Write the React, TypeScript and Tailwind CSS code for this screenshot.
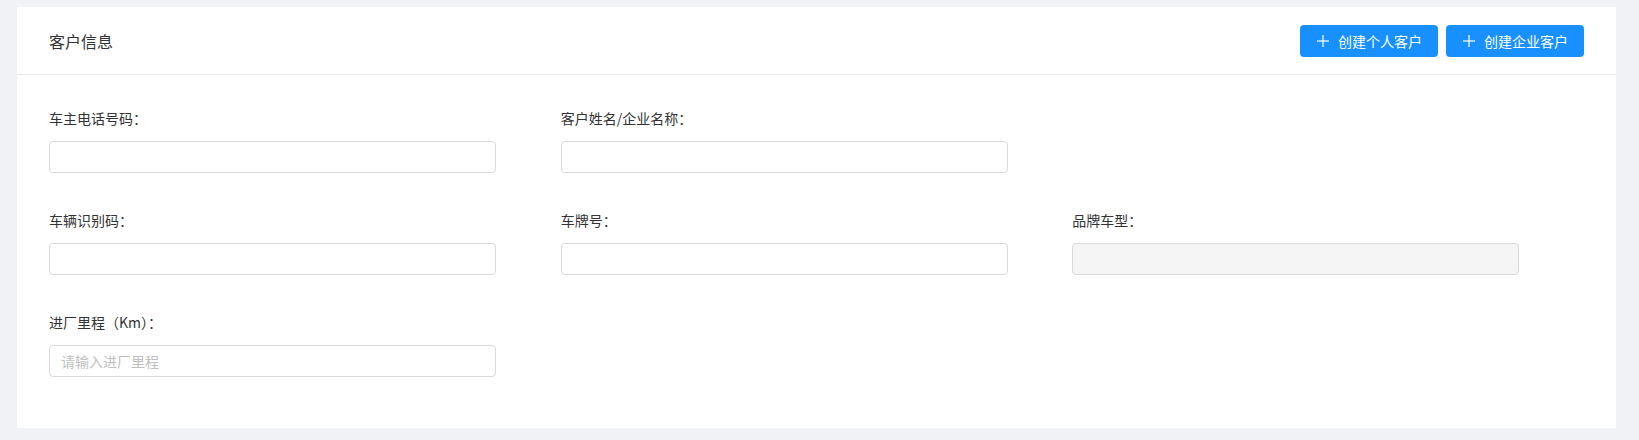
import React from 'react';

interface Field {
    id: string;
    label: string;
    placeholder?: string;
    disabled?: boolean;
}

// null = empty cell in the 3-column grid
const fields: (Field | null)[] = [
    { id: 'phone', label: '车主电话号码：' },
    { id: 'name', label: '客户姓名/企业名称：' },
    null,
    { id: 'vin', label: '车辆识别码：' },
    { id: 'plate', label: '车牌号：' },
    { id: 'model', label: '品牌车型：', disabled: true },
    { id: 'mileage', label: '进厂里程（Km）：', placeholder: '请输入进厂里程' },
];

const PlusIcon = () => (
    <svg width="14" height="14" viewBox="0 0 14 14" fill="currentColor">
        <rect x="6.4" y="1" width="1.2" height="12" />
        <rect x="1" y="6.4" width="12" height="1.2" />
    </svg>
);

const ActionButton = ({ text }: { text: string }) => (
    <button className="flex items-center gap-2 h-8 px-4 rounded bg-[#1890ff] text-white text-sm leading-none">
        <PlusIcon />
        <span>{text}</span>
    </button>
);

const App = () => {
    return (
        <div
            className="h-[440px] bg-[#f0f2f5] pt-[7px] pl-[17px] pr-[23px] text-[#333]"
            style={{ fontFamily: '"Noto Sans CJK SC", "Noto Sans", sans-serif' }}
        >
            <div className="bg-white h-[421px]">
                {/* Header */}
                <div className="h-[68px] flex items-center justify-between px-8 border-b border-[#e8e8e8]">
                    <h2 className="text-base text-[#333]">客户信息</h2>
                    <div className="flex items-center gap-2">
                        <ActionButton text="创建个人客户" />
                        <ActionButton text="创建企业客户" />
                    </div>
                </div>

                {/* Form */}
                <div className="px-8 pt-8 grid grid-cols-3 gap-y-9">
                    {fields.map((field, index) =>
                        field ? (
                            <div key={field.id} className="flex flex-col">
                                <label className="text-sm leading-[22px] text-[#333] mb-3">{field.label}</label>
                                <input
                                    disabled={field.disabled}
                                    placeholder={field.placeholder}
                                    className={`w-[447px] h-8 px-[11px] text-sm rounded border border-[#d9d9d9] outline-none placeholder:text-[#bfbfbf] ${
                                        field.disabled ? 'bg-[#f5f5f5]' : 'bg-white'
                                    }`}
                                />
                            </div>
                        ) : (
                            <div key={`empty-${index}`} />
                        )
                    )}
                </div>
            </div>
        </div>
    );
};

export default App;
